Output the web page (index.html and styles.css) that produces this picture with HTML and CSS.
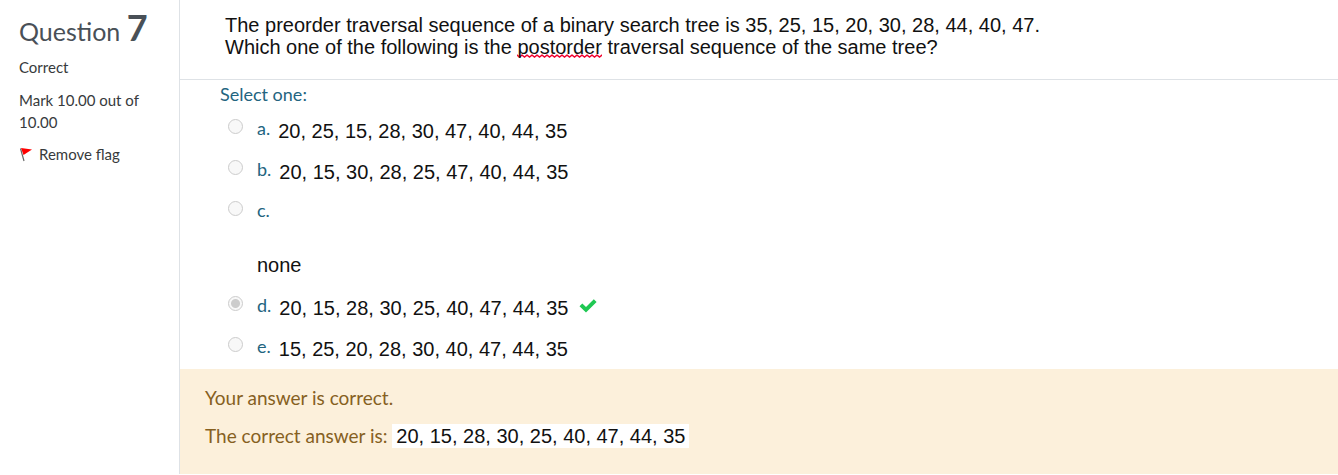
FILE: index.html
```html
<!DOCTYPE html>
<html lang="en">
<head>
<meta charset="utf-8">
<title>Question 7</title>
<link rel="stylesheet" href="styles.css">
</head>
<body>
<div class="question">
  <aside class="info">
    <h3 class="title">Question <span class="number">7</span></h3>
    <div class="state">Correct</div>
    <div class="grade">Mark 10.00 out of 10.00</div>
    <button class="flag" type="button"><svg class="flag-icon" viewBox="0 0 14 16" aria-hidden="true"><path d="M1.5 2.5 5 15" stroke="#666" stroke-width="1.2" fill="none"/><path d="M2 2 13 3.5 4.5 9Z" fill="#f00"/></svg>Remove flag</button>
  </aside>
  <main class="content">
    <div class="prompt">
      <p>The preorder traversal sequence of a binary search tree is 35, 25, 15, 20, 30, 28, 44, 40, 47.<br>Which one of the following is the <span class="misspelt">postorder</span> traversal sequence of the same tree?</p>
    </div>
    <fieldset class="answers">
      <legend class="select">Select one:</legend>
      <div class="option"><input type="radio" name="answer" id="a" disabled><label for="a"><span class="letter">a.</span><span class="value">20, 25, 15, 28, 30, 47, 40, 44, 35</span></label></div>
      <div class="option"><input type="radio" name="answer" id="b" disabled><label for="b"><span class="letter">b.</span><span class="value">20, 15, 30, 28, 25, 47, 40, 44, 35</span></label></div>
      <div class="option tall"><input type="radio" name="answer" id="c" disabled><label class="stacked" for="c"><span class="letter">c.</span><span class="value">none</span></label></div>
      <div class="option"><input type="radio" name="answer" id="d" disabled checked><label for="d"><span class="letter">d.</span><span class="value">20, 15, 28, 30, 25, 40, 47, 44, 35</span></label><svg class="check" viewBox="0 0 20 16" role="img" aria-label="Correct"><path d="M1.5 8.3 4.3 5.5 8 9 15.8 1.3 18.6 4 8 14.6Z" fill="#1fc853"/></svg></div>
      <div class="option"><input type="radio" name="answer" id="e" disabled><label for="e"><span class="letter">e.</span><span class="value">15, 25, 20, 28, 30, 40, 47, 44, 35</span></label></div>
    </fieldset>
    <div class="feedback">
      <p>Your answer is correct.</p>
      <p class="right">The correct answer is: <span class="solution">20, 15, 28, 30, 25, 40, 47, 44, 35</span></p>
    </div>
  </main>
</div>
</body>
</html>
```
FILE: styles.css
```css
* { box-sizing: border-box; }
body { margin: 0; background: #fff; color: #373a3c; font-family: Lato, sans-serif; }
p, h3 { margin: 0; }
.question { display: flex; min-height: 100vh; padding-bottom: 1px; }
.info { flex: 0 0 180px; padding: 8px 24px 0 19px; border-right: 1px solid #dee2e6; font-size: 15px; line-height: 22px; }
.title { color: #495057; font-size: 25px; line-height: 38px; font-weight: 400; white-space: nowrap; }
.number { font-size: 36px; font-weight: 700; }
.state { margin-top: 6px; }
.grade { margin-top: 11px; }
.flag { display: flex; align-items: center; gap: 6px; margin-top: 10px; padding: 0; border: 0; background: none; color: inherit; font: inherit; }
.flag-icon { width: 14px; height: 16px; }
.content { flex: 1; min-width: 0; display: flex; flex-direction: column; }
.prompt { padding: 14px 45px 21px; border-bottom: 1px solid #dee2e6; color: #111; font: 20px/22px "Liberation Sans", Arial, sans-serif; }
.misspelt { background: url("data:image/svg+xml,%3Csvg xmlns='http://www.w3.org/2000/svg' width='5' height='4'%3E%3Cpath d='M-1 0 0 1 2.5 3 5 1 6 0' fill='none' stroke='%23f0002c' stroke-width='1.4'/%3E%3C/svg%3E") left bottom / 5px 4px repeat-x; }
.answers { margin: 0; padding: 0 40px 2px; border: 0; min-width: 0; color: #23647f; font-size: 18px; }
.select { padding: 0; line-height: 28px; }
.option { display: flex; align-items: flex-start; height: 41px; padding-top: 10px; }
.option.tall { height: 95px; }
.option input { appearance: none; flex: none; width: 15px; height: 15px; margin: 1px 14px 0 8px; border: 1px solid #ccc; border-radius: 50%; background: #f8f8f8; }
.option input:checked { background: radial-gradient(circle, #ccc 0 4px, #f8f8f8 5px); }
.option label { display: flex; gap: 8px; line-height: 20px; }
.option .stacked { flex-direction: column; gap: 32px; }
.value { color: #111; font: 20px/26px "Liberation Sans", Arial, sans-serif; }
.check { width: 20px; height: 16px; margin: 3px 0 0 10px; }
.feedback { flex: 1; padding: 16px 25px; background: #fcf0db; color: #86601f; font-size: 19px; line-height: 26px; }
.right { margin-top: 12px; }
.solution { display: inline-block; padding: 0 4px; background: #fff; color: #111; font: 20px/24px "Liberation Sans", Arial, sans-serif; }
```
